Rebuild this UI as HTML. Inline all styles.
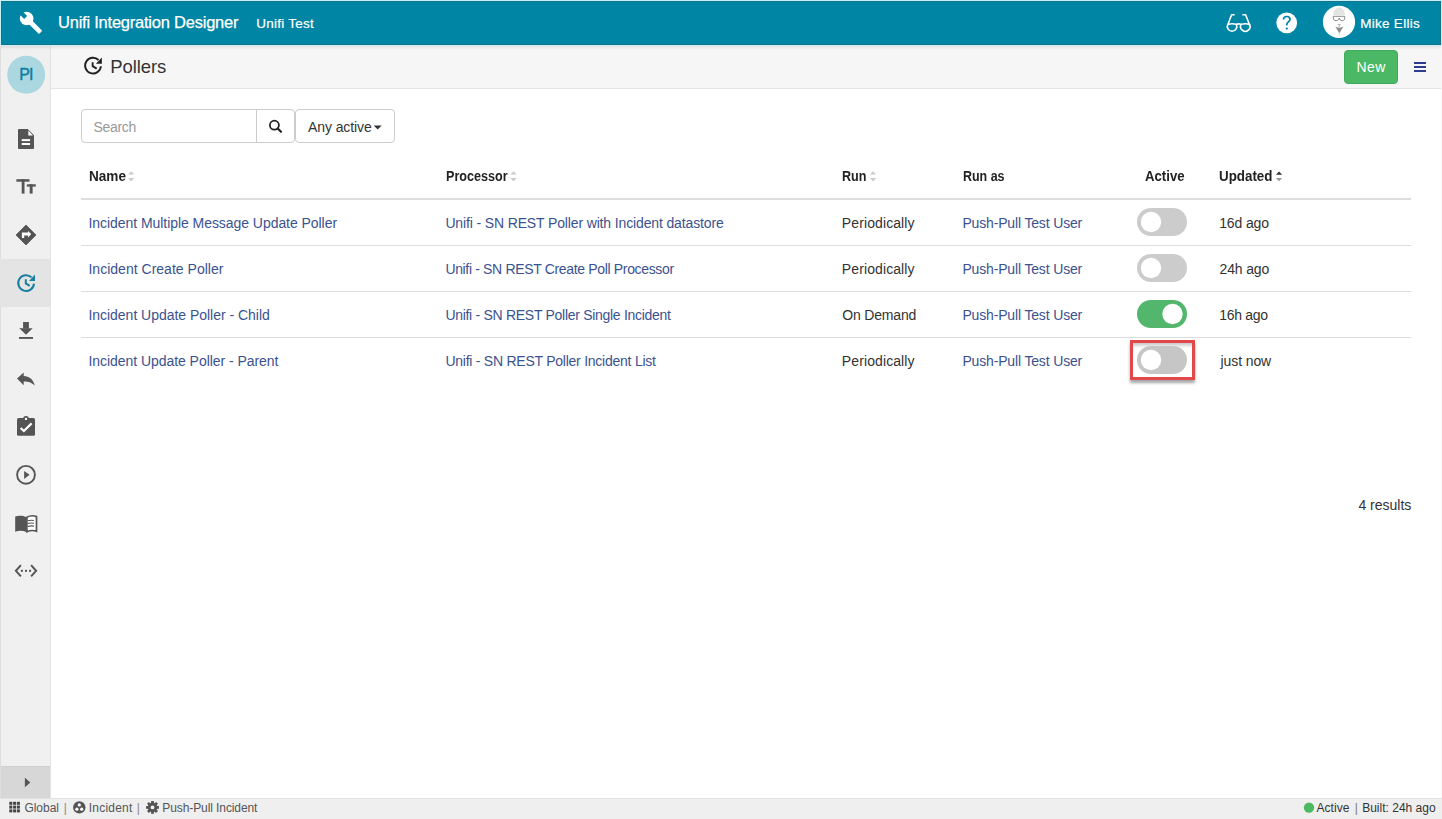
<!DOCTYPE html>
<html><head><meta charset="utf-8">
<style>
*{box-sizing:border-box;margin:0;padding:0}
html,body{width:1442px;height:819px;overflow:hidden;background:#fff;font-family:"Liberation Sans",sans-serif;color:#333}
.b{position:absolute}
.t{position:absolute;white-space:pre;line-height:1}
</style></head><body>
<div class="b" style="left:0;top:0;width:1442px;height:819px;background:#f7f7f7"></div>
<div class="b" style="left:0;top:0;width:1442px;height:46px;background:#c4f1f8"></div>
<!-- top bar -->
<div class="b" style="left:1px;top:1px;width:1440px;height:44px;background:#0085a4"></div>
<div class="b" style="left:1px;top:1px;width:1440px;height:1px;background:#17728a"></div>
<div class="b" style="left:1px;top:1px;width:1px;height:44px;background:#17728a"></div>
<div class="b" style="left:1440px;top:1px;width:1px;height:44px;background:#17728a"></div>
<!-- sidebar -->
<div class="b" style="left:0;top:45px;width:51px;height:753px;background:#f0f0f0"></div>
<div class="b" style="left:0;top:45px;width:1px;height:753px;background:#dedede"></div>
<div class="b" style="left:50px;top:45px;width:1px;height:753px;background:#e3e3e3"></div>
<div class="b" style="left:0;top:259px;width:50px;height:48px;background:#e4e4e4"></div>
<div class="b" style="left:1px;top:767px;width:49px;height:31px;background:#d7d7d7"></div>
<div class="b" style="left:1px;top:766px;width:49px;height:1px;background:#cfcfcf"></div>
<!-- content header -->
<div class="b" style="left:51px;top:45px;width:1390px;height:43px;background:#f6f6f6"></div>
<div class="b" style="left:51px;top:88px;width:1390px;height:1px;background:#e4e4e4"></div>
<!-- content -->
<div class="b" style="left:51px;top:89px;width:1390px;height:709px;background:#fff"></div>
<!-- New button -->
<div class="b" style="left:1344px;top:50px;width:54px;height:34px;background:#4bb865;border:1px solid #40ac5a;border-radius:4px"></div>
<!-- search group -->
<div class="b" style="left:81px;top:109px;width:214px;height:34px;border:1px solid #cccccc;border-radius:4px;background:#fff"></div>
<div class="b" style="left:256px;top:109px;width:1px;height:34px;background:#cccccc"></div>
<div class="b" style="left:295px;top:109px;width:100px;height:34px;border:1px solid #cccccc;border-radius:4px;background:#fff"></div>
<!-- table lines -->
<div class="b" style="left:81px;top:198px;width:1330px;height:2px;background:#dddddd"></div>
<div class="b" style="left:81px;top:245px;width:1330px;height:1px;background:#dddddd"></div>
<div class="b" style="left:81px;top:291px;width:1330px;height:1px;background:#dddddd"></div>
<div class="b" style="left:81px;top:337px;width:1330px;height:1px;background:#dddddd"></div>
<!-- footer -->
<div class="b" style="left:0;top:798px;width:1442px;height:21px;background:#efefef"></div>
<div class="b" style="left:0;top:798px;width:1442px;height:1px;background:#e2e2e2"></div>

<div class="b" style="left:1px;top:44px;width:1440px;height:1px;background:#14728a"></div>
<div class="b" style="left:1px;top:45px;width:1440px;height:1px;background:#cdebf2"></div>
<div class="b" style="left:1px;top:46px;width:1440px;height:4px;background:linear-gradient(rgba(0,0,0,0.07),rgba(0,0,0,0))"></div>
<svg class="b" style="left:0;top:0" width="1442" height="819" viewBox="0 0 1442 819">
<defs>
 <filter id="sh" x="-20%" y="-20%" width="140%" height="150%"><feDropShadow dx="0" dy="3" stdDeviation="1.8" flood-color="#000" flood-opacity="0.35"/></filter>
<linearGradient id="ish" x1="0" y1="0" x2="0" y2="1"><stop offset="0" stop-color="#000" stop-opacity="0.22"/><stop offset="1" stop-color="#000" stop-opacity="0"/></linearGradient>
</defs>
<!-- wrench -->
<g transform="translate(26.65 18.45) rotate(45)" fill="#fff">
  <circle r="6.8"/>
  <rect x="0" y="-2.35" width="19.8" height="4.7" rx="0.8"/>
  <rect x="-8" y="-2.1" width="6.6" height="4.2" fill="#0085a4"/>
</g>
<!-- glasses -->
<g fill="none" stroke="#fff" stroke-width="1.6" stroke-linejoin="round">
  <path d="M1227.9 24.2 Q1232.1 23.3 1236.2 24.2 Q1238.7 23.6 1241.2 24.2 Q1245.3 23.3 1249.4 24.2"/>
  <path d="M1227.9 24.2 A4.75 4.75 0 1 0 1236.2 24.2"/>
  <path d="M1241.2 24.2 A4.75 4.75 0 1 0 1249.4 24.2"/>
  <path d="M1234.7 14.7 H1231.6 L1227.6 25.2"/>
  <path d="M1242.4 14.7 H1245.6 L1249.7 25.2"/>
</g>
<!-- help -->
<circle cx="1286.7" cy="22.8" r="10.4" fill="#fff"/>
<path d="M1283.5 19.6 C1283.5 17.5 1285 16.5 1286.8 16.5 C1288.7 16.5 1290 17.8 1290 19.4 C1290 21.5 1287 22.2 1286.8 24.3 V25.6" fill="none" stroke="#0085a4" stroke-width="1.7"/>
<circle cx="1286.8" cy="28.6" r="1.15" fill="#0085a4"/>
<!-- avatar -->
<circle cx="1339" cy="21.9" r="16.1" fill="#fff"/>
<path d="M1333.3 15 C1333.3 10 1336.2 7.8 1339.1 7.8 C1342 7.8 1344.8 10 1344.8 15 Z" fill="#e3e3e3"/>
<path d="M1333.3 16.3 H1344.8 V18 C1344.8 20 1343.8 20.6 1342.2 20.6 C1340.4 20.6 1339.5 19.8 1339.3 18 C1339 19.8 1338 20.6 1336.2 20.6 C1334.4 20.6 1333.3 20 1333.3 18 Z" fill="none" stroke="#8a8a8a" stroke-width="1"/>
<path d="M1336.8 24 H1341.5 L1339.8 25.3 V27.2 H1338.6 V25.3 Z" fill="#bdbdbd"/>
<path d="M1335.2 26.5 C1336.5 28 1342 28 1343.6 26.5 L1339.3 33.3 Z" fill="#8f8f8f"/>
<path d="M1338.2 33 H1340.4 L1339.3 37 Z" fill="#e8e8e8"/>
<!-- Pollers header history icon -->
<g fill="none" stroke="#222" stroke-width="1.9">
  <path d="M100.9 66.2 A7.9 7.9 0 1 1 98.6 60"/>
  <path d="M92.65 62.3 V66.1 L96.7 68.6"/>
</g>
<path d="M101.9 57.4 V63.8 H95.9 Z" fill="#222"/>
<!-- hamburger -->
<g fill="#2e3b90">
  <rect x="1414" y="62" width="12" height="2"/>
  <rect x="1414" y="66" width="12" height="2"/>
  <rect x="1414" y="70" width="12" height="2"/>
</g>
<!-- PI avatar -->
<circle cx="26.2" cy="74.75" r="19" fill="#abd7e1"/>
<!-- sidebar icons -->
<g fill="#555">
  <!-- file -->
  <path d="M19 129 H27.7 L34 135.3 V148 Q34 149 33 149 H19 Q18 149 18 148 V130 Q18 129 19 129 Z"/>
  <!-- Tt -->
  <rect x="16.4" y="179.2" width="13.1" height="2.5"/>
  <rect x="21.7" y="179.2" width="2.8" height="14.4"/>
  <rect x="26.8" y="184.3" width="9" height="2.3"/>
  <rect x="29.7" y="184.3" width="2.9" height="9.3"/>
  <!-- diamond -->
  <path d="M26 225 L36 235 L26 245 L16 235 Z" stroke="#555" stroke-width="0.8" stroke-linejoin="round"/>
  <!-- download -->
  <rect x="23.1" y="322" width="5.8" height="6.6"/>
  <path d="M19.3 328.2 H32.7 L26 334.7 Z"/>
  <rect x="19" y="337" width="14" height="1.9"/>
  <!-- reply -->
  <path d="M17 378.6 L23.7 372.4 V375.9 C29 376 33.6 379.2 34.9 385.9 C32.6 382.6 28.6 381.4 23.7 381.4 V385.3 Z"/>
  <!-- clipboard -->
  <rect x="17" y="418" width="18" height="17.8" rx="1.5"/>
  <circle cx="26" cy="418.9" r="2.9"/>
  <!-- play -->
  <path d="M24.1 470.9 V478.9 L29.6 474.8 Z"/>
  <!-- book left -->
  <path d="M15.2 516.6 C18.3 515.4 23 515.5 26.2 517.2 V531.9 C23 530.4 18.3 530.4 15.2 531.8 Z"/>
  <!-- code dots -->
  <rect x="20.9" y="569.8" width="2" height="2"/>
  <rect x="25" y="569.8" width="2" height="2"/>
  <rect x="29.1" y="569.8" width="2" height="2"/>
  <!-- caret right -->
  <path d="M24.9 777.8 L30.3 782.5 L24.9 787.2 Z"/>
</g>
<g fill="#fff">
  <path d="M28.3 130.6 V135.6 H33 Z"/>
  <rect x="21.7" y="139.1" width="8.4" height="2"/>
  <rect x="21.7" y="143" width="8.4" height="2"/>
  <path d="M21.9 238.1 V232.6 H28 V230.9 L31.2 234.1 L28 237.4 V235.5 H24.2 V238.1 Z"/>
  <circle cx="26" cy="418.9" r="1.2"/>
</g>
<polyline points="20.6,428 23.9,431 31.6,423.4" fill="none" stroke="#fff" stroke-width="2.2"/>
<circle cx="26" cy="474.8" r="8.9" fill="none" stroke="#555" stroke-width="1.9"/>
<path d="M26.9 517.2 C29.8 515.6 33.8 515.5 36.5 516.6 V531.2 C33.8 530.3 29.8 530.4 26.9 531.7 Z" fill="#fff" stroke="#555" stroke-width="1.7"/>
<g stroke="#555" stroke-width="1.1" fill="none">
  <path d="M27.8 520.8 C29.5 520.2 31.8 520.1 33.9 520.5"/>
  <path d="M27.8 523.6 C29.5 523 31.8 522.9 33.9 523.3"/>
  <path d="M27.8 526.4 C29.5 525.8 31.8 525.7 33.9 526.1"/>
</g>
<g fill="none" stroke="#555" stroke-width="2" stroke-linejoin="miter">
  <polyline points="20.9,565.2 15.9,570.8 20.9,576.3"/>
  <polyline points="31.1,565.2 36.1,570.8 31.1,576.3"/>
</g>
<!-- sidebar history (teal) -->
<g fill="none" stroke="#187f9f" stroke-width="2">
  <path d="M34 283.6 A7.9 7.9 0 1 1 31.6 277.4"/>
  <path d="M25.8 279.3 V283.4 L29.7 285.8"/>
</g>
<path d="M35 274.6 V280.9 H29 Z" fill="#187f9f"/>

<!-- search icon -->
<circle cx="274.4" cy="125.2" r="4.5" fill="none" stroke="#222" stroke-width="1.8"/>
<line x1="277.7" y1="128.5" x2="281" y2="131.8" stroke="#222" stroke-width="2.2" stroke-linecap="round"/>
<!-- caret down -->
<path d="M373.7 125.4 H381.7 L377.7 129.5 Z" fill="#333"/>
<!-- sort icons -->
<g fill="#cccccc">
  <path d="M128 174.6 L131.2 171.3 L134.4 174.6 Z"/><path d="M128 178 L131.2 181.4 L134.4 178 Z"/>
  <path d="M510.3 174.6 L513.5 171.3 L516.7 174.6 Z"/><path d="M510.3 178 L513.5 181.4 L516.7 178 Z"/>
  <path d="M869.8 174.6 L873 171.3 L876.2 174.6 Z"/><path d="M869.8 178 L873 181.4 L876.2 178 Z"/>
</g>
<path d="M1275.9 174.7 L1279 171.5 L1282.2 174.7 Z" fill="#333"/>
<path d="M1275.9 178.1 L1279 181.3 L1282.2 178.1 Z" fill="#999"/>

<!-- toggles -->
<rect x="1137" y="208" width="50" height="28" rx="14" fill="#cccccc"/>
<circle cx="1151" cy="222" r="10.2" fill="#fff"/>
<rect x="1137" y="254" width="50" height="28" rx="14" fill="#cccccc"/>
<circle cx="1151" cy="268" r="10.2" fill="#fff"/>
<rect x="1137" y="300" width="50" height="28" rx="14" fill="#52b66c"/>
<circle cx="1172.5" cy="314" r="10.2" fill="#fff"/>
<rect x="1131.5" y="341.5" width="62" height="37" fill="#fff" stroke="#e2464b" stroke-width="3" filter="url(#sh)"/>
<rect x="1133" y="343" width="59" height="5" fill="url(#ish)"/>
<rect x="1137" y="346" width="50" height="28" rx="14" fill="#c6c6c6"/>
<circle cx="1151" cy="360" r="10.2" fill="#fff"/>

<!-- footer icons -->
<g fill="#444">
  <rect x="9.3" y="801.8" width="3" height="3"/><rect x="13.1" y="801.8" width="3" height="3"/><rect x="16.9" y="801.8" width="3" height="3"/>
  <rect x="9.3" y="805.6" width="3" height="3"/><rect x="13.1" y="805.6" width="3" height="3"/><rect x="16.9" y="805.6" width="3" height="3"/>
  <rect x="9.3" y="809.4" width="3" height="3"/><rect x="13.1" y="809.4" width="3" height="3"/><rect x="16.9" y="809.4" width="3" height="3"/>
</g>
<circle cx="79.3" cy="807.4" r="6.2" fill="#555"/>
<g fill="#fff"><circle cx="79.3" cy="804.9" r="1.6"/><circle cx="76.9" cy="809.2" r="1.6"/><circle cx="81.7" cy="809.2" r="1.6"/></g>
<g transform="translate(152.5 807.4)" fill="#555">
  <circle r="4.7"/>
  <rect x="-1.4" y="-6.4" width="2.8" height="12.8"/>
  <rect x="-1.4" y="-6.4" width="2.8" height="12.8" transform="rotate(45)"/>
  <rect x="-1.4" y="-6.4" width="2.8" height="12.8" transform="rotate(90)"/>
  <rect x="-1.4" y="-6.4" width="2.8" height="12.8" transform="rotate(135)"/>
  <circle r="1.9" fill="#efefef"/>
</g>
<circle cx="1309" cy="807.6" r="5.2" fill="#4cb963"/>
</svg>
<span class="t" style="left:19.2px;top:67px;font-size:16px;letter-spacing:-0.9px;-webkit-text-stroke:0.4px #0b7fa0;color:#0b7fa0">PI</span>
<span class="t" style="left:58.02px;font-size:16.5px;letter-spacing:-0.229px;top:14px;color:#ffffff;-webkit-text-stroke:0.25px #fff">Unifi Integration Designer</span>
<span class="t" style="left:256.28px;font-size:13.5px;letter-spacing:0.255px;top:17px;color:#ffffff;-webkit-text-stroke:0.2px #fff">Unifi Test</span>
<span class="t" style="left:1360.14px;font-size:13.5px;letter-spacing:0.293px;top:17px;color:#ffffff;-webkit-text-stroke:0.2px #fff">Mike Ellis</span>
<span class="t" style="left:110.25px;font-size:18.5px;letter-spacing:-0.092px;top:58px;color:#333">Pollers</span>
<span class="t" style="left:1356.40px;font-size:14px;letter-spacing:0.500px;top:60px;color:#ffffff">New</span>
<span class="t" style="left:93.40px;font-size:14px;letter-spacing:-0.275px;top:120px;color:#999">Search</span>
<span class="t" style="left:308.04px;font-size:14px;letter-spacing:-0.096px;top:120px;color:#333">Any active</span>
<span class="t" style="left:89.03px;font-size:14px;transform:scaleX(0.9695);transform-origin:0 0;font-weight:bold;top:169px;color:#222">Name</span>
<span class="t" style="left:445.58px;font-size:14px;transform:scaleX(0.8996);transform-origin:0 0;font-weight:bold;top:169px;color:#222">Processor</span>
<span class="t" style="left:842.16px;font-size:14px;transform:scaleX(0.8999);transform-origin:0 0;font-weight:bold;top:169px;color:#222">Run</span>
<span class="t" style="left:963.18px;font-size:14px;transform:scaleX(0.8895);transform-origin:0 0;font-weight:bold;top:169px;color:#222">Run as</span>
<span class="t" style="left:1145.17px;font-size:14px;transform:scaleX(0.9414);transform-origin:0 0;font-weight:bold;top:169px;color:#222">Active</span>
<span class="t" style="left:1219.05px;font-size:14px;transform:scaleX(0.9540);transform-origin:0 0;font-weight:bold;top:169px;color:#222">Updated</span>
<span class="t" style="left:88.43px;font-size:14px;letter-spacing:-0.051px;top:216px;color:#3b5290">Incident Multiple Message Update Poller</span>
<span class="t" style="left:445.38px;font-size:14px;letter-spacing:-0.137px;top:216px;color:#3b5290">Unifi - SN REST Poller with Incident datastore</span>
<span class="t" style="left:841.85px;font-size:14px;letter-spacing:0.101px;top:216px;color:#333">Periodically</span>
<span class="t" style="left:962.40px;font-size:14px;letter-spacing:-0.155px;top:216px;color:#3b5290">Push-Pull Test User</span>
<span class="t" style="left:1219.22px;font-size:14px;letter-spacing:-0.132px;top:216px;color:#333">16d ago</span>
<span class="t" style="left:88.43px;font-size:14px;letter-spacing:0.018px;top:262px;color:#3b5290">Incident Create Poller</span>
<span class="t" style="left:445.38px;font-size:14px;letter-spacing:-0.338px;top:262px;color:#3b5290">Unifi - SN REST Create Poll Processor</span>
<span class="t" style="left:841.85px;font-size:14px;letter-spacing:0.101px;top:262px;color:#333">Periodically</span>
<span class="t" style="left:962.40px;font-size:14px;letter-spacing:-0.155px;top:262px;color:#3b5290">Push-Pull Test User</span>
<span class="t" style="left:1219.50px;font-size:14px;letter-spacing:-0.141px;top:262px;color:#333">24h ago</span>
<span class="t" style="left:88.43px;font-size:14px;letter-spacing:-0.026px;top:308px;color:#3b5290">Incident Update Poller - Child</span>
<span class="t" style="left:445.38px;font-size:14px;letter-spacing:-0.289px;top:308px;color:#3b5290">Unifi - SN REST Poller Single Incident</span>
<span class="t" style="left:842.23px;font-size:14px;letter-spacing:-0.165px;top:308px;color:#333">On Demand</span>
<span class="t" style="left:962.40px;font-size:14px;letter-spacing:-0.155px;top:308px;color:#3b5290">Push-Pull Test User</span>
<span class="t" style="left:1219.22px;font-size:14px;letter-spacing:-0.298px;top:308px;color:#333">16h ago</span>
<span class="t" style="left:88.43px;font-size:14px;letter-spacing:-0.048px;top:354px;color:#3b5290">Incident Update Poller - Parent</span>
<span class="t" style="left:445.38px;font-size:14px;letter-spacing:-0.245px;top:354px;color:#3b5290">Unifi - SN REST Poller Incident List</span>
<span class="t" style="left:841.85px;font-size:14px;letter-spacing:0.101px;top:354px;color:#333">Periodically</span>
<span class="t" style="left:962.40px;font-size:14px;letter-spacing:-0.155px;top:354px;color:#3b5290">Push-Pull Test User</span>
<span class="t" style="left:1220.62px;font-size:14px;letter-spacing:-0.105px;top:354px;color:#333">just now</span>
<span class="t" style="left:1358.40px;font-size:14px;letter-spacing:0.003px;top:498px;color:#333">4 results</span>
<span class="t" style="left:24.40px;font-size:12px;letter-spacing:-0.012px;top:802px;color:#555">Global</span>
<span class="t" style="left:63.77px;font-size:12px;letter-spacing:0.000px;top:802px;color:#8a8a8a">|</span>
<span class="t" style="left:88.81px;font-size:12px;letter-spacing:0.206px;top:802px;color:#555">Incident</span>
<span class="t" style="left:136.86px;font-size:12px;letter-spacing:0.000px;top:802px;color:#8a8a8a">|</span>
<span class="t" style="left:162.34px;font-size:12px;letter-spacing:-0.096px;top:802px;color:#555">Push-Pull Incident</span>
<span class="t" style="left:1316.44px;font-size:12px;letter-spacing:0.075px;top:802px;color:#333">Active</span>
<span class="t" style="left:1354.77px;font-size:12px;letter-spacing:0.000px;top:802px;color:#777">|</span>
<span class="t" style="left:1362.16px;font-size:12px;letter-spacing:0.005px;top:802px;color:#333">Built: 24h ago</span>
</body></html>
